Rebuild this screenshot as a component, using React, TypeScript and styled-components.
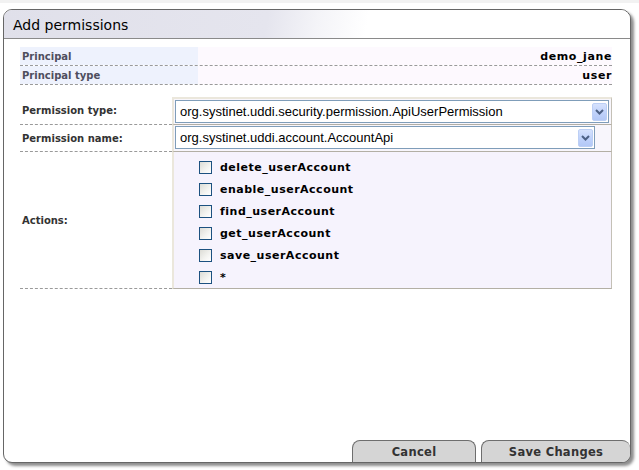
import React from "react";
import styled, { createGlobalStyle } from "styled-components";

const Global = createGlobalStyle`
  html, body { margin: 0; padding: 0; background: #ffffff; }
  body { font-family: "DejaVu Sans", Verdana, sans-serif; }
  * { box-sizing: border-box; }
`;

const Page = styled.div`
  padding: 9px 0 0 3px;
  width: 639px;
  height: 470px;
  border-top: 3px solid #f2f2f2;
  padding-top: 6px;
`;

const Dialog = styled.div`
  width: 628px;
  height: 454px;
  border: 1px solid #666666;
  border-radius: 9px 10px 9px 9px;
  box-shadow: 3px 3px 3px rgba(0, 0, 0, 0.45);
  background: #ffffff;
  display: flex;
  flex-direction: column;
  overflow: hidden;
`;

const TitleBar = styled.div`
  height: 29px;
  border-bottom: 1px solid #8a8a8a;
  background: linear-gradient(100deg, #e0e0ea 0%, #e5e5ee 42%, #f4f4f8 50%, #ffffff 58%, #ffffff 100%);
  padding-left: 9px;
  display: flex;
  align-items: center;
  font-family: "DejaVu Sans", Verdana, sans-serif;
  font-size: 14px;
  color: #000000;
  padding-top: 1px;
`;

const Body = styled.div`
  padding: 8px 18px 0 16px;
  flex: 1;
`;

const InfoRow = styled.div`
  display: grid;
  grid-template-columns: 178px 1fr;
  height: 19px;
  border-bottom: 1px dashed #9a9a9a;
`;

const InfoLabel = styled.div`
  background: #eef2fd;
  color: #4e4e5e;
  font-size: 10px;
  font-weight: bold;
  padding-left: 2px;
  display: flex;
  align-items: center;
`;

const InfoValue = styled.div`
  background: #fdf9fe;
  color: #000000;
  font-size: 11px;
  font-weight: bold;
  letter-spacing: 0.6px;
  display: flex;
  align-items: center;
  justify-content: flex-end;
`;

const Form = styled.div`
  margin-top: 12px;
  display: grid;
  grid-template-columns: 152px 1fr;
`;

const FieldLabel = styled.div`
  border-bottom: 1px dashed #9a9a9a;
  color: #333333;
  font-size: 10px;
  font-weight: bold;
  padding-left: 2px;
  display: flex;
  align-items: center;
`;

const FieldCell = styled.div<{ $first?: boolean; $last?: boolean }>`
  background: ${(p) => (p.$last ? "#f6f3fd" : "#f8f6fc")};
  border-left: 2px solid #ebe7dc;
  border-right: 1px solid #c4c0b6;
  border-top: ${(p) => (p.$first ? "2px solid #ebe7dc" : "none")};
  border-bottom: 1px solid #b3afa5;
  padding: ${(p) => (p.$first ? "1px 2px 1px 1px" : p.$last ? "9px 0 4px 25px" : "1px 2px 2px 1px")};
`;

const Select = styled.div<{ $w: number }>`
  width: ${(p) => p.$w}px;
  height: 23px;
  border: 1px solid #7f9db9;
  background: #ffffff;
  display: flex;
  align-items: center;
  padding: 1px 1px 1px 4px;
  font-family: "Liberation Sans", Arial, sans-serif;
  font-size: 13px;
  color: #000000;
`;

const SelectText = styled.span`
  flex: 1;
  white-space: nowrap;
  overflow: hidden;
`;

const DropButton = styled.div`
  width: 15px;
  height: 18px;
  border: 1px solid #bccff5;
  border-radius: 2px;
  background: linear-gradient(180deg, #d6e2fd 0%, #c1d3fb 50%, #b3c8f6 100%);
  display: flex;
  align-items: center;
  justify-content: center;
`;

const Actions = styled.div`
  display: flex;
  flex-direction: column;
  gap: 9px;
`;

const ActionRow = styled.label`
  height: 13px;
  display: flex;
  align-items: center;
  gap: 8px;
  font-size: 11px;
  font-weight: bold;
  letter-spacing: 0.5px;
  color: #000000;
`;

const Box = styled.span`
  width: 13px;
  height: 13px;
  border: 1px solid #1c5180;
  background: linear-gradient(135deg, #dcdcd6 0%, #f4f4f1 60%, #ffffff 100%);
  flex: none;
`;

const ActionText = styled.span`
  line-height: 13px;
`;

const Footer = styled.div`
  display: flex;
  justify-content: flex-end;
  gap: 5px;
  height: 22px;
`;

const TabButton = styled.button<{ $w: number; $edge?: boolean }>`
  width: ${(p) => p.$w}px;
  height: 22px;
  background: #d5d5d5;
  border: 1px solid #6e6e6e;
  border-bottom: none;
  border-right: ${(p) => (p.$edge ? "none" : "1px solid #6e6e6e")};
  border-radius: 8px 8px 0 0;
  font-family: "DejaVu Sans", Verdana, sans-serif;
  font-size: 11.5px;
  font-weight: bold;
  color: #333333;
  letter-spacing: 0.3px;
  padding: 1px 0 0 0;
  cursor: pointer;
`;

const Chevron = () => (
  <svg width="9" height="6" viewBox="0 0 9 6">
    <path d="M1 1 L4.5 4.5 L8 1" fill="none" stroke="#4d6185" strokeWidth="2" />
  </svg>
);

const actions = [
  "delete_userAccount",
  "enable_userAccount",
  "find_userAccount",
  "get_userAccount",
  "save_userAccount",
  "*",
];

export default function App() {
  return (
    <>
      <Global />
      <Page>
        <Dialog>
          <TitleBar>Add permissions</TitleBar>
          <Body>
            <InfoRow>
              <InfoLabel>Principal</InfoLabel>
              <InfoValue>demo_jane</InfoValue>
            </InfoRow>
            <InfoRow>
              <InfoLabel>Principal type</InfoLabel>
              <InfoValue>user</InfoValue>
            </InfoRow>
            <Form>
              <FieldLabel>Permission type:</FieldLabel>
              <FieldCell $first>
                <Select $w={434}>
                  <SelectText>org.systinet.uddi.security.permission.ApiUserPermission</SelectText>
                  <DropButton>
                    <Chevron />
                  </DropButton>
                </Select>
              </FieldCell>
              <FieldLabel>Permission name:</FieldLabel>
              <FieldCell>
                <Select $w={420}>
                  <SelectText>org.systinet.uddi.account.AccountApi</SelectText>
                  <DropButton>
                    <Chevron />
                  </DropButton>
                </Select>
              </FieldCell>
              <FieldLabel>Actions:</FieldLabel>
              <FieldCell $last>
                <Actions>
                  {actions.map((a) => (
                    <ActionRow key={a}>
                      <Box />
                      <ActionText>{a}</ActionText>
                    </ActionRow>
                  ))}
                </Actions>
              </FieldCell>
            </Form>
          </Body>
          <Footer>
            <TabButton $w={124}>Cancel</TabButton>
            <TabButton $w={149} $edge>
              Save Changes
            </TabButton>
          </Footer>
        </Dialog>
      </Page>
    </>
  );
}
